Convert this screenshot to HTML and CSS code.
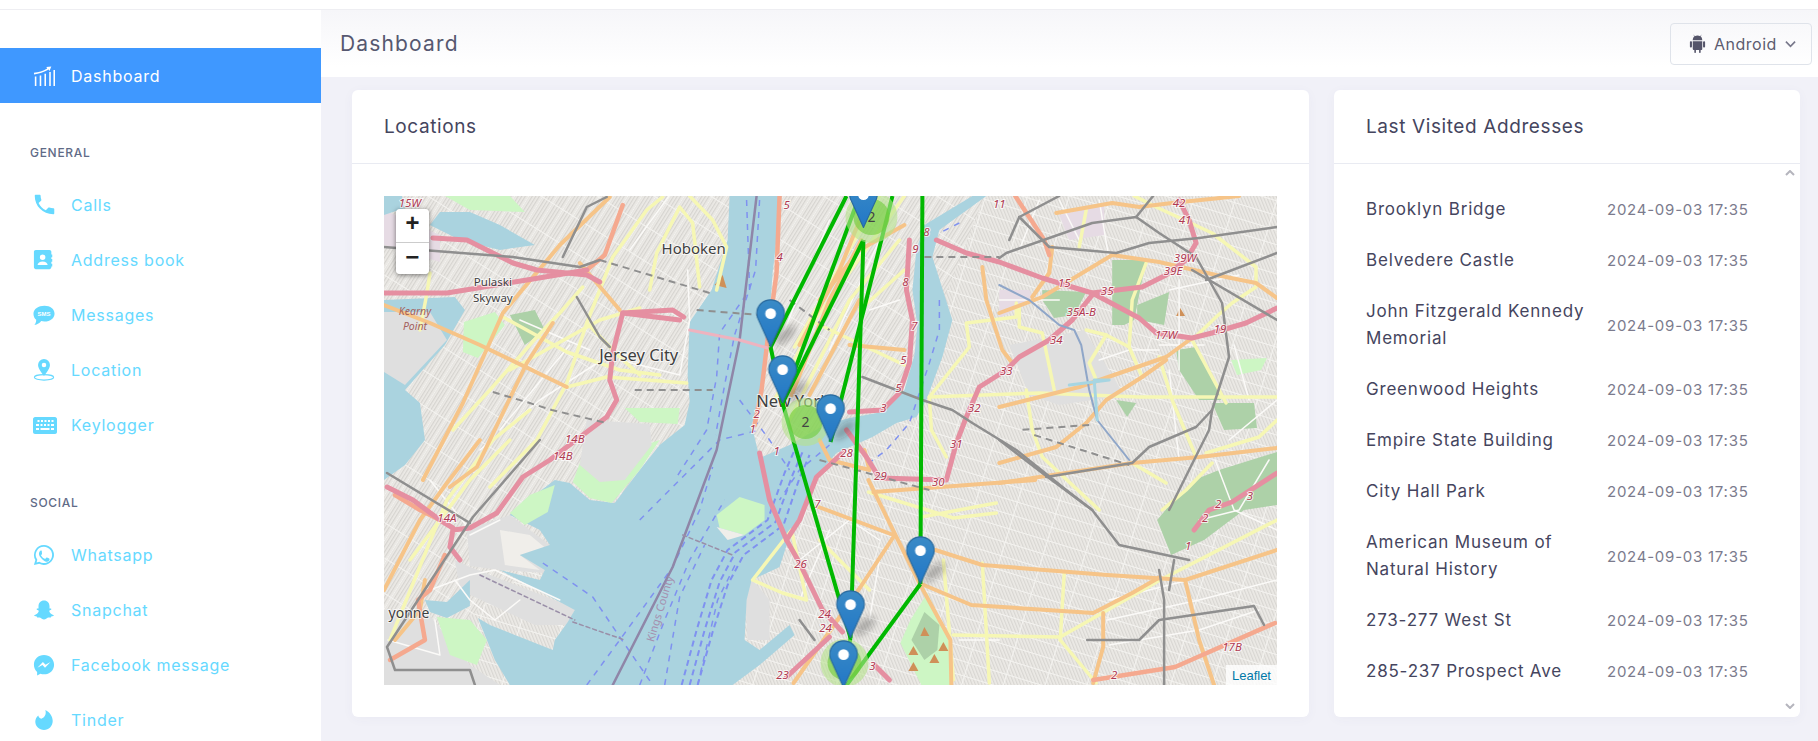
FILE: index.html
```html
<!DOCTYPE html>
<html lang="en">
<head>
	<meta charset="UTF-8">
	<title>Dashboard</title>
	<link rel="stylesheet" href="styles.css">
</head>
<body>
	<div class="topstrip"></div>
	<div class="layout">
		<aside class="sidebar">
			<a class="nav active">
				<svg class="ico" viewBox="0 0 24 24"><path d="M1 8.500C6 8 11 6.500 15.500 3.800l-.9-1.500L20 1.500l-2 5-.9-1.500C12 8 6.500 9.800 1.200 10.300z"/><path d="M2 12.500h1.700V23H2zM7.300 11.500H9V23H7.300zM12.500 9.500h1.700V23h-1.700zM17.700 7.500h1.700V23h-1.700zM22.300 5.500H24V23h-1.700z"/></svg>
				<span>Dashboard</span>
			</a>
			<div class="navlabel">General</div>
			<a class="nav">
				<svg class="ico" viewBox="0 0 24 24"><path d="M6.100 9.800c1.600 3.500 4.400 6.300 7.900 7.900l2.600-2.600c.3-.3.800-.4 1.200-.3 1.300.4 2.900.8 4.300.8.600 0 1.100.5 1.100 1.100v4.200c0 .6-.5 1.100-1.100 1.100C10.700 22 1.900 13.200 1.900 1.900 1.900 1.300 2.400.8 3 .8h4.200c.6 0 1.100.5 1.100 1.100 0 1.500.3 3 .8 4.300.1.400 0 .9-.3 1.200z"/></svg>
				<span>Calls</span>
			</a>
			<a class="nav">
				<svg class="ico" viewBox="0 0 24 24"><path fill-rule="evenodd" d="M3 1h15c1 0 2 .8 2 2v3h1v3h-1v2h1v3h-1v2h1v3h-1v1c0 1-1 2-2 2H3c-1 0-2-1-2-2V3c0-1.200 1-2 2-2zm7.500 5a3 3 0 1 0 0 6 3 3 0 0 0 0-6zM5 17.500h11c0-2.500-2.500-4-5.500-4S5 15 5 17.500z"/></svg>
				<span>Address book</span>
			</a>
			<a class="nav">
				<svg class="ico" viewBox="0 0 24 24"><path d="M12.500 2C18.900 2 23.500 5.600 23.500 10.500S18.900 19 12.500 19c-1.300 0-2.500-.1-3.600-.4C7.400 20.800 4.800 22.500 1.500 23c1.200-1.300 2-3.200 2-5.800C1.600 15.700.5 13.300.5 10.500.5 5.600 6 2 12.500 2z"/><text class="smstext" x="12" y="13">SMS</text></svg>
				<span>Messages</span>
			</a>
			<a class="nav">
				<svg class="ico" viewBox="0 0 24 24"><path d="M12 0a6.500 6.500 0 0 0-6.500 6.500C5.500 11 12 18.500 12 18.500S18.500 11 18.500 6.500A6.500 6.500 0 0 0 12 0zm0 9a2.500 2.500 0 1 1 0-5 2.500 2.500 0 0 1 0 5z"/><ellipse cx="12" cy="20" rx="10.500" ry="3" fill="none" stroke="#66d9ff" stroke-width="1.200"/></svg>
				<span>Location</span>
			</a>
			<a class="nav">
				<svg class="ico wide" viewBox="0 0 24 17"><path fill-rule="evenodd" d="M2 0h20c1 0 2 1 2 2v13c0 1-1 2-2 2H2c-1 0-2-1-2-2V2C0 1 1 0 2 0zm2.500 3v2h2V3zm3.500 0v2h2V3zm3.500 0v2h2V3zm3.500 0v2h2V3zm3.500 0v2h2V3zM3 7v2h3V7zm4.500 0v2h2V7zm3.500 0v2h2V7zm3.500 0v2h2V7zm3.500 0v2h3V7zM3 11v2h3v-2zm4.500 0v2h9v-2zm10.500 0v2h3v-2z"/></svg>
				<span>Keylogger</span>
			</a>
			<div class="navlabel">Social</div>
			<a class="nav">
				<svg class="ico" viewBox="0 0 24 24"><path fill-rule="evenodd" d="M12 1a10.900 10.900 0 0 0-9.400 16.400L1 23l5.800-1.500A10.900 10.900 0 1 0 12 1zm0 2a8.900 8.900 0 1 1-4.700 16.500l-.4-.2-3 .8.800-3-.3-.4A8.900 8.900 0 0 1 12 3z"/><path d="M8.800 7c-.3 0-.7.100-1 .5-.4.400-1.300 1.300-1.300 3s1.300 3.400 1.500 3.600c.2.200 2.600 3.900 6.200 5.300 1.700.1 3.300-.9 3.700-2 .2-.6.2-1.200.1-1.300-.2-.3-2.300-1.300-2.700-1.400-.3-.1-.6-.2-.8.200l-1 1.200c-.2.200-.4.200-.7.100-1.800-.8-3.100-2-4-3.600-.2-.4 0-.5.200-.7l.8-1c.1-.3.100-.5 0-.7L9.600 7.500c-.2-.4-.5-.5-.8-.5z"/></svg>
				<span>Whatsapp</span>
			</a>
			<a class="nav">
				<svg class="ico" viewBox="0 0 24 24"><path d="M12 1.500c3.700 0 6 2.900 6 6.300v2.500c.6.300 1.400-.2 1.900.3.500.7-.4 1.300-1.500 1.800-.6.300-.8.600-.6 1.200.8 1.900 2.400 3.300 4.700 4 .4.300.1.800-.5 1-.7.300-1.600.4-2.100.6-.3.500-.2 1.100-.8 1.100-1-.1-2.200-.3-3.200.2-1 .6-2 1.800-3.900 1.800s-2.900-1.200-3.900-1.800c-1-.5-2.200-.3-3.200-.2-.6 0-.5-.6-.8-1.100-.5-.2-1.400-.3-2.100-.6-.6-.2-.9-.7-.5-1 2.300-.7 3.900-2.100 4.700-4 .2-.6 0-.9-.6-1.200-1.100-.5-2-1.100-1.500-1.800.5-.5 1.300 0 1.900-.3V7.800c0-3.400 2.300-6.300 6-6.300z"/></svg>
				<span>Snapchat</span>
			</a>
			<a class="nav">
				<svg class="ico" viewBox="0 0 24 24"><path fill-rule="evenodd" d="M12 1C5.800 1 1 5.500 1 11.600c0 3.200 1.300 6 3.500 7.900V23.500l3.600-2c1.200.4 2.500.6 3.900.6 6.200 0 11-4.500 11-10.500S18.200 1 12 1zm1.100 14-2.800-3-5.500 3 6-6.400 2.900 3 5.400-3z"/></svg>
				<span>Facebook message</span>
			</a>
			<a class="nav">
				<svg class="ico" viewBox="0 0 24 24"><path d="M9 10.500C13.800 8.800 14.500 4.500 13.500 1c5 2.300 8 7.200 8 12.200 0 5.500-4.300 9.800-9.500 9.800S2.500 18.800 2.500 14c0-2.700 1.200-5.300 3.300-7C5.800 8.500 7.400 10.300 9 10.500z"/></svg>
				<span>Tinder</span>
			</a>
		</aside>

		<main class="content">
			<header class="pagehead">
				<h1>Dashboard</h1>
				<button class="devicebtn">
					<svg class="droid" viewBox="0 0 24 24"><path d="M6 9h12v10c0 .7-.5 1.200-1.200 1.200H16v3c0 1.100-2 1.100-2 0v-3h-4v3c0 1.100-2 1.100-2 0v-3H7.200C6.500 20.200 6 19.700 6 19zM3.700 9c.8 0 1.300.5 1.300 1.200v5.600c0 1.600-2.600 1.600-2.600 0v-5.600C2.400 9.500 3 9 3.700 9zm16.600 0c.7 0 1.300.5 1.300 1.200v5.600c0 1.600-2.600 1.600-2.600 0v-5.600c0-.7.500-1.200 1.300-1.200zM15.500 2.700l1.200-1.900.4.300-1.100 1.900C17.200 3.800 18 5.500 18 8H6c0-2.500.8-4.200 2-5l-1.100-1.900.4-.3 1.200 1.900C10.500 1.700 13.500 1.700 15.500 2.700z"/></svg>
					<span>Android</span>
					<svg class="chev" viewBox="0 0 12 8"><path d="M1 1.500 6 6.500l5-5"/></svg>
				</button>
			</header>

			<div class="cards">
				<section class="card mapcard">
					<h2 class="cardhead">Locations</h2>
					<div class="cardbody">
						<div class="map">
							<svg class="mapsvg" viewBox="384 196 894 489" preserveAspectRatio="none">
								<defs>
									<pattern id="hatchA" width="3" height="3" patternUnits="userSpaceOnUse" patternTransform="rotate(-22)">
										<rect width="3" height="3" fill="#eceae6"/>
										<rect width="1.200" height="3" fill="#d8d6d2"/>
									</pattern>
									<pattern id="hatchB" width="3" height="3" patternUnits="userSpaceOnUse" patternTransform="rotate(32)">
										<rect width="3" height="3" fill="#eceae6"/>
										<rect width="1.200" height="3" fill="#d6d4d0"/>
									</pattern>
									<pattern id="gridA" width="40" height="14" patternUnits="userSpaceOnUse" patternTransform="rotate(17)">
										<rect x="0" y="0" width="40" height="1" fill="#f4f3f0"/>
										<rect x="0" y="0" width="1" height="14" fill="#f4f3f0"/>
									</pattern>
									<pattern id="gridB" width="30" height="12" patternUnits="userSpaceOnUse" patternTransform="rotate(-58)">
										<rect x="0" y="0" width="30" height="1" fill="#f4f3f0"/>
										<rect x="0" y="0" width="1" height="12" fill="#f4f3f0"/>
									</pattern>
									<linearGradient id="pinfill" x1="0" y1="0" x2="0" y2="1">
										<stop offset="0" stop-color="#3a8bc6"/>
										<stop offset="1" stop-color="#2277c7"/>
									</linearGradient>
									<symbol id="pin" viewBox="0 0 25 41">
										<path d="M12.500.7C6 .7.700 5.800.700 12.300c0 2.200.7 4.300 1.700 6L12.500 40.600l10.100-22.300c1-1.700 1.700-3.800 1.700-6C24.300 5.800 19 .7 12.500.7z" fill="url(#pinfill)" stroke="#2a6a9e" stroke-width="1"/>
										<circle cx="12.500" cy="12.500" r="4.600" fill="#fff"/>
									</symbol>
									<filter id="soft"><feGaussianBlur stdDeviation="3"/></filter>
								</defs>

								<!-- land -->
								<rect x="384" y="196" width="894" height="489" fill="url(#hatchA)"/>
								<rect x="384" y="196" width="894" height="489" fill="url(#gridA)"/>
								<polygon points="384,196 782,196 760,460 640,480 384,685" fill="url(#hatchB)"/>
								<polygon points="384,196 782,196 760,460 640,480 384,685" fill="url(#gridB)"/>
								<polygon points="782,196 985,196 905,400 830,440 760,460" fill="url(#hatchB)"/>
								<polygon points="782,196 985,196 905,400 830,440 760,460" fill="url(#gridB)"/>

								<!-- plain areas -->
								<polygon class="plain" points="384,610 425,610 450,640 470,665 500,685 384,685"/>
								<polygon class="plain" points="455,560 470,567 575,608 570,625 535,625 460,590"/>
								<polygon class="plain" points="467,530 510,515 550,545 545,573 500,570 470,566"/>
								<polygon class="pale" points="500,530 530,535 548,550 520,555 540,570 505,565"/>
								<polygon class="plain" points="384,310 430,310 447,340 405,385 384,372"/>
								<polygon class="plain" points="1010,345 1085,330 1125,395 1060,405 1030,395"/>
								<polygon class="plain" points="745,590 753,580 770,600 770,640 748,640"/>
								<polygon class="lilac" points="384,210 440,235 440,262 384,245"/>
								<polygon class="lilac" points="1000,290 1030,290 1035,300 1000,318"/>
								<polygon class="lilac" points="1060,215 1105,205 1105,235 1070,240"/>

								<!-- water -->
								<polygon class="water" points="730,196 728,240 712,290 690,322 688,375 690,402 685,425 660,445 640,470 615,503 590,500 570,483 555,480 535,495 525,500 510,515 540,530 550,545 520,555 545,570 540,580 500,570 575,610 568,622 555,640 553,650 490,625 478,618 487,640 495,660 510,685 733,685 760,665 795,635 790,625 760,650 745,640 747,600 752,580 780,567 793,527 810,503 813,480 837,453 873,437 897,423 917,417 927,400 943,357 953,320 933,257 940,230 987,196 973,196 925,225 917,250 913,290 918,325 915,355 905,390 883,412 850,418 825,425 790,445 760,458 752,425 763,390 768,347 773,273 782,196"/>
								<polygon class="water" points="440,212 470,212 500,225 535,245 500,250 460,240 430,225"/>
								<polygon class="water" points="384,300 455,297 465,310 445,345 405,390 420,403 425,440 405,465 384,480"/>
								<polygon class="plain" points="384,312 430,312 447,340 405,385 384,372"/>
								<polygon class="water" points="425,600 447,602 470,580 470,606 447,618 430,612"/>
								<polygon class="water" points="384,196 402,196 405,208 384,215"/>

								<!-- parks -->
								<polygon class="lawn" points="464,322 495,312 505,325 478,358 463,352"/>
								<polygon class="lawn" points="625,408 680,408 678,424 640,422"/>
								<polygon class="lawn" points="660,440 640,470 612,503 590,498 573,482 585,450 610,465 645,445"/>
								<polygon class="plain" points="587,420 650,424 652,445 625,480 600,482 580,465"/>
								<polygon class="lawn" points="510,513 530,495 555,485 548,512 525,525"/>
								<polygon class="lawn" points="740,497 765,505 765,520 745,535 720,528 717,515"/>
								<polygon class="pale" points="717,527 745,535 728,540"/>
								<polygon class="lawn" points="437,617 470,620 487,640 477,665 450,655"/>
								<polygon class="lawn" points="928,593 950,640 952,685 922,685 901,643 911,620"/>
								<polygon class="wood" points="925,612 940,625 938,650 925,660 912,640"/>
								<polygon class="lawn" points="445,196 510,196 525,212 470,210"/>
								<polygon class="wood" points="510,315 535,310 545,330 525,345"/>
								<polygon class="wood" points="1043,290 1087,292 1075,315 1055,318 1043,300"/>
								<polygon class="wood" points="1113,260 1147,260 1135,320 1125,325 1113,325"/>
								<polygon class="wood" points="1138,305 1170,292 1165,325 1150,322 1138,320"/>
								<polygon class="wood" points="1177,350 1197,347 1217,385 1222,400 1200,400 1180,370"/>
								<polygon class="wood" points="1213,403 1255,403 1258,428 1225,430"/>
								<polygon class="wood" points="1117,400 1137,403 1128,417"/>
								<polygon class="wood" points="1220,470 1278,452 1278,505 1245,510 1205,540 1172,555 1158,520 1175,500 1195,480"/>
								<polygon class="lawn" points="1232,360 1268,358 1262,370 1238,375"/>
								<g class="peak">
									<polygon points="925,627 921,636 930,636"/><polygon points="914,646 909,655 919,655"/>
									<polygon points="944,642 939,651 949,651"/><polygon points="935,654 930,663 940,663"/>
									<polygon points="914,662 909,671 919,671"/><polygon points="1181,308 1177,316 1186,316"/>
									<polygon points="723,275 715,285 727,288"/>
								</g>

								<!-- ferry routes and boundaries -->
								<g class="ferry">
									<polyline points="747,200 750,290 720,333 717,377 707,430 677,477"/>
									<polyline points="760,200 756,270 735,335 725,385 716,435"/>
									<polyline points="587,685 620,640 673,567 700,510 713,467"/>
									<polyline points="640,685 665,620 690,560 725,500"/>
									<polyline points="665,685 680,597 705,545"/>
									<polyline points="698,685 718,600 738,560"/>
									<polyline points="543,563 593,597 620,637 653,685"/>
									<polyline points="940,300 940,330 930,363 910,423 887,450 860,470"/>
									<polyline points="960,223 940,233"/>
									<polyline points="830,445 800,470 780,500"/>
									<polyline points="740,400 770,440 790,470"/>
									<polyline points="640,520 690,470 720,440 760,430"/>
								</g>
								<g class="ferrybig">
									<polyline points="682,685 697,630 712,580 728,550 768,520 785,473 795,450"/>
									<polyline points="690,685 705,630 720,582 736,552 776,522 793,475 803,452"/>
									<polyline points="698,685 713,632 728,585 744,555 784,525 800,478 810,455"/>
								</g>
								<polyline class="bound" points="613,685 673,567 717,450 740,340 757,196"/>
								<polyline class="bound thin" points="683,535 733,555"/>
								<polyline class="bound thin" points="573,622 625,640"/>
								<polyline class="bound thin" points="480,575 575,620"/>

								<!-- minor streets -->
								<g class="st">
									<polyline points="480,450 540,400 610,355"/><polyline points="500,430 570,345"/>
									<polyline points="620,360 680,375 690,320"/><polyline points="690,320 688,270"/>
									<polyline points="630,250 670,195"/><polyline points="520,320 590,350"/>
									<polyline points="430,480 470,530"/><polyline points="430,590 470,575 495,570 560,600"/>
									<polyline points="455,580 470,600 495,620 520,600"/><polyline points="388,640 440,655 435,620"/>
									<polyline points="500,520 470,535"/>
									<polyline points="785,330 830,220"/><polyline points="830,350 880,240"/>
									<polyline points="900,300 870,310"/><polyline points="800,560 850,520 880,540"/>
									<polyline points="1000,300 1060,300"/><polyline points="1100,360 1130,350 1160,350"/>
									<polyline points="1170,370 1180,460"/><polyline points="1160,345 1205,345"/>
									<polyline points="1170,290 1240,275"/><polyline points="1180,280 1180,370"/>
									<polyline points="1235,345 1250,400"/><polyline points="1278,400 1230,440"/>
									<polyline points="1100,200 1110,260"/><polyline points="1060,200 1080,240"/>
									<polyline points="1020,250 1040,200"/><polyline points="1270,460 1240,510 1200,520"/>
									<polyline points="1108,620 1200,600 1278,580"/><polyline points="1110,645 1200,630 1260,610"/>
									<polyline points="1110,600 1190,580"/><polyline points="1216,460 1235,510 1278,530"/>
									<polyline points="960,640 1000,640"/><polyline points="830,530 800,600"/>
									<polyline points="880,560 870,620"/>
								</g>

								<!-- secondary -->
								<g class="se">
									<polyline points="453,430 490,390 537,337 560,313 583,287"/>
									<polyline points="490,487 537,440 567,383 587,323 613,257 647,210 663,197"/>
									<polyline points="567,387 607,377 687,383"/>
									<polyline points="503,317 567,352 620,370 660,375"/>
									<polyline points="587,323 620,357 640,375"/>
									<polyline points="650,290 657,253 680,207 693,223 700,287"/>
									<polyline points="717,290 727,247 713,220 690,196"/>
									<polyline points="430,273 427,293 420,330"/>
									<polyline points="390,640 447,500 493,440 530,410"/>
									<polyline points="410,560 470,480 510,440"/>
									<polyline points="510,370 600,320 640,308"/>
									<polyline points="795,347 880,196"/><polyline points="775,400 815,320 830,300 905,196"/>
									<polyline points="790,420 850,300 900,240"/><polyline points="860,310 905,270"/>
									<polyline points="810,320 905,365"/>
									<polyline points="930,397 970,347 967,323 1017,317 1017,303"/>
									<polyline points="930,397 932,430 947,457"/>
									<polyline points="930,397 1040,393 1140,397 1278,397"/>
									<polyline points="1020,307 1020,327 1043,333 1055,390"/>
									<polyline points="1027,390 1033,430 1043,457 1100,510"/>
									<polyline points="1087,330 1107,335 1090,363 1097,380"/>
									<polyline points="1107,335 1130,347 1143,377"/>
									<polyline points="1130,347 1133,300 1147,263"/>
									<polyline points="1160,357 1173,400 1197,457"/>
									<polyline points="1193,340 1220,390 1227,403"/>
									<polyline points="1193,340 1217,317 1233,303 1257,287 1257,267 1213,233 1157,207 1135,196"/>
									<polyline points="1087,210 1080,247"/>
									<polyline points="1133,463 1167,483"/>
									<polyline points="1213,463 1187,490 1163,510"/>
									<polyline points="1207,453 1260,437 1278,420"/>
									<polyline points="869,492 954,518 997,513"/>
									<polyline points="922,517 997,503"/>
									<polyline points="944,560 954,680"/><polyline points="983,563 990,683"/>
									<polyline points="954,635 1061,637 1161,580"/>
									<polyline points="1061,640 1097,683"/><polyline points="1065,573 1061,640"/>
									<polyline points="1161,580 1278,520"/>
									<polyline points="753,580 792,530 807,600 783,593 753,580"/>
									<polyline points="870,590 820,540"/>
								</g>

								<!-- primary -->
								<g class="pr">
									<polyline points="423,480 463,403 503,313 560,245 610,197"/>
									<polyline points="553,323 527,363 477,467 450,487"/>
									<polyline points="384,305 430,323 480,345 567,387"/>
									<polyline points="620,310 580,263"/>
									<polyline points="384,590 420,520 447,483 480,440"/>
									<polyline points="395,640 420,610 425,580"/>
									<polyline points="800,345 840,270 870,196"/><polyline points="792,395 830,300 862,240"/>
									<polyline points="810,395 860,300"/><polyline points="850,345 905,350"/>
									<polyline points="820,300 860,250 905,225"/>
									<polyline points="1000,313 1043,297 1113,255 1160,262 1217,275 1257,283 1278,298"/>
									<polyline points="1000,407 1080,387 1167,357 1193,338"/>
									<polyline points="1000,463 1057,447 1087,423 1107,400 1143,377 1167,360"/>
									<polyline points="1000,483 1133,463 1200,457 1278,448"/>
									<polyline points="1057,213 1113,203 1140,207 1173,203 1240,196"/>
									<polyline points="1053,247 1050,273 1033,297"/>
									<polyline points="983,267 987,300 1003,350 1013,363"/>
									<polyline points="922,584 972,605 1094,613 1133,593 1161,577"/>
									<polyline points="936,550 983,565 1108,575 1186,580 1278,550"/>
									<polyline points="869,480 897,537 922,587 951,640 952,685"/>
									<polyline points="894,537 861,587 822,643 794,683"/>
									<polyline points="1104,613 1104,647 1094,683"/>
									<polyline points="819,507 894,535"/>
									<polyline points="874,492 1036,480"/>
									<polyline points="1186,580 1200,640 1215,685"/>
									<polyline points="820,440 830,460 870,470 865,450"/>
								</g>

								<!-- trunk -->
								<g class="tr">
									<polyline points="780,196 777,273 768,340 762,390 755,425"/>
									<polyline points="623,205 605,255 587,270"/>
									<polyline points="395,495 420,510 440,520"/>
									<polyline points="445,555 430,590 418,600 425,640 390,660"/>
									<polyline points="1094,680 1176,667 1276,623"/>
									<polyline points="1016,196 1045,240 1050,255"/>
								</g>

								<!-- motorways -->
								<g class="mw">
									<polyline points="384,293 447,293 527,280 587,270"/>
									<polyline points="433,238 467,240 513,263 537,270 587,275 600,282"/>
									<polyline points="684,317 673,310 623,313 613,353 610,380 617,400 607,417 567,447 550,460 523,477 497,513 470,528 453,530 450,547 460,560"/>
									<polyline points="623,313 680,320"/>
									<polyline points="387,487 413,500 440,520 453,528"/>
									<polyline points="910,240 907,290 913,320 910,363 900,393 883,410 850,412"/>
									<polyline points="937,240 967,253 1000,262 1043,278 1093,293 1140,318 1157,333 1193,338 1213,333 1247,323 1278,308"/>
									<polyline points="1093,293 1143,287 1167,275 1187,260 1197,243 1190,220 1180,200"/>
									<polyline points="1093,295 1073,320 1050,340 1020,357 1007,370 980,387 967,417 957,443 947,480 880,478 867,457 847,430"/>
									<polyline points="843,453 817,477 800,520 787,540"/>
									<polyline points="760,453 770,500 787,540 800,563 823,610 843,632"/>
									<polyline points="787,677 830,637"/>
									<polyline points="1278,473 1233,502 1210,510 1195,530"/>
									<polyline points="875,665 890,680"/>
								</g>
								<polyline class="mwlight" points="690,330 740,340 768,348"/>

								<!-- railways -->
								<g class="rl">
									<polyline points="863,377 923,400 953,410 973,423 1017,450 1067,490 1093,510"/>
									<polyline points="1000,440 1043,473 1093,510 1120,545 1190,560"/>
									<polyline points="1047,477 1133,463 1150,447 1197,427 1213,410 1230,357 1223,303 1197,257 1160,233 1137,217 1093,223 1007,253 1000,258"/>
									<polyline points="1050,247 1117,253 1150,243 1200,238 1278,227"/>
									<polyline points="1170,510 1210,430 1213,410"/>
									<polyline points="1193,270 1278,320"/>
									<polyline points="1207,280 1278,253"/>
									<polyline points="1020,217 1050,247"/><polyline points="1010,240 1020,217 1060,196"/>
									<polyline points="1154,196 1137,217"/>
									<polyline points="1160,570 1165,600 1165,685"/>
									<polyline points="1088,640 1140,640 1160,620 1255,606 1265,625"/>
									<polyline points="1170,590 1175,560"/>
									<polyline points="384,247 513,257 580,267 600,260"/>
									<polyline points="563,257 587,207 607,197"/>
									<polyline points="577,297 600,337 610,347"/>
									<polyline points="540,440 473,517 420,597 387,647 395,670 470,670 475,685"/>
									<polyline points="387,473 470,523"/>
									<polyline points="815,640 800,620"/>
								</g>
								<g class="rldash">
									<polyline points="600,260 710,293"/>
									<polyline points="493,392 530,403 552,410 607,423"/>
									<polyline points="635,390 713,390"/>
									<polyline points="697,310 760,315"/>
									<polyline points="925,257 1000,257"/>
									<polyline points="1035,435 1130,465"/>
									<polyline points="1090,425 1020,430"/>
									<polyline points="820,460 930,490"/>
									<polyline points="790,300 830,330"/>
								</g>
								<polyline class="canal" points="1000,285 1030,300 1060,325 1075,330 1082,345 1090,390 1098,420 1130,460"/>
								<polyline class="canal pale" points="1070,385 1110,380 1095,380 1098,420"/>

								<!-- labels -->
								<g class="hw">
									<text x="410" y="204">15W</text><text x="787" y="206">5</text><text x="780" y="258">4</text>
									<text x="757" y="415">2</text><text x="753" y="430">1</text><text x="777" y="452">1</text>
									<text x="575" y="440">14B</text><text x="563" y="457">14B</text><text x="447" y="519">14A</text>
									<text x="916" y="250">9</text><text x="927" y="233">8</text><text x="906" y="283">8</text>
									<text x="915" y="327">7</text><text x="904" y="361">5</text><text x="899" y="389">5</text>
									<text x="884" y="409">3</text><text x="1065" y="284">15</text><text x="1108" y="292">35</text>
									<text x="1082" y="313">35A-B</text><text x="1057" y="341">34</text><text x="1007" y="372">33</text>
									<text x="975" y="409">32</text><text x="957" y="445">31</text><text x="939" y="483">30</text>
									<text x="881" y="477">29</text><text x="847" y="454">28</text><text x="1167" y="336">17W</text>
									<text x="1221" y="330">19</text><text x="1186" y="259">39W</text><text x="1174" y="272">39E</text>
									<text x="1186" y="221">41</text><text x="1180" y="204">42</text><text x="818" y="505">7</text>
									<text x="801" y="565">26</text><text x="825" y="615">24</text><text x="826" y="629">24</text>
									<text x="783" y="676">23</text><text x="873" y="667">3</text><text x="1233" y="648">17B</text>
									<text x="1115" y="676">2</text><text x="1219" y="505">2</text><text x="1251" y="497">3</text>
									<text x="1206" y="519">2</text><text x="1189" y="547">1</text><text x="1000" y="205">11</text>
								</g>
								<g class="place">
									<text x="694" y="254" font-size="15">Hoboken</text>
									<text x="639" y="361" font-size="16.500">Jersey City</text>
									<text x="793" y="407" font-size="16.500">New York</text>
									<text x="493" y="286" font-size="11.500">Pulaski</text>
									<text x="493" y="302" font-size="11.500">Skyway</text>
									<text x="409" y="618" font-size="14">yonne</text>
								</g>
								<g class="kearny">
									<text x="415" y="315">Kearny</text>
									<text x="415" y="330">Point</text>
								</g>
								<text class="county" x="664" y="610" transform="rotate(-73 664 610)">Kings County</text>

								<!-- route -->
								<g class="route">
									<line x1="771" y1="347" x2="847" y2="196"/>
									<line x1="783" y1="403" x2="860" y2="196"/>
									<line x1="783" y1="403" x2="864" y2="240"/>
									<line x1="831" y1="442" x2="893" y2="196"/>
									<line x1="864" y1="240" x2="851" y2="638"/>
									<line x1="923" y1="196" x2="921" y2="584"/>
									<line x1="771" y1="347" x2="783" y2="403"/>
									<line x1="783" y1="403" x2="851" y2="638"/>
									<line x1="851" y1="638" x2="845" y2="672"/>
									<line x1="921" y1="584" x2="845" y2="688"/>
								</g>

								<!-- clusters -->
								<circle class="clout" cx="872" cy="217" r="26"/><circle class="clin" cx="872" cy="217" r="18"/>
								<text class="clnum" x="872" y="222">2</text>
								<circle class="clout" cx="806" cy="422" r="24"/><circle class="clin" cx="806" cy="422" r="17"/>
								<text class="clnum" x="806" y="427">2</text>
								<circle class="clout" cx="845" cy="663" r="24"/><circle class="clin" cx="845" cy="663" r="17"/>

								<!-- pin shadows -->
								<g class="pinshadow">
									<ellipse cx="785" cy="335" rx="13" ry="6" transform="rotate(-40 785 335)"/>
									<ellipse cx="797" cy="391" rx="13" ry="6" transform="rotate(-40 797 391)"/>
									<ellipse cx="845" cy="430" rx="13" ry="6" transform="rotate(-40 845 430)"/>
									<ellipse cx="935" cy="572" rx="13" ry="6" transform="rotate(-40 935 572)"/>
									<ellipse cx="865" cy="626" rx="13" ry="6" transform="rotate(-40 865 626)"/>
								</g>

								<!-- pins -->
								<use href="#pin" x="849" y="180" width="30" height="48"/>
								<use href="#pin" x="756" y="299" width="30" height="48"/>
								<use href="#pin" x="768" y="355" width="30" height="48"/>
								<use href="#pin" x="816" y="394" width="30" height="48"/>
								<use href="#pin" x="906" y="536" width="30" height="48"/>
								<use href="#pin" x="836" y="590" width="30" height="48"/>
								<use href="#pin" x="829" y="640" width="30" height="48"/>
							</svg>
							<div class="zoomctl">
								<a class="zoombtn">+</a>
								<a class="zoombtn">−</a>
							</div>
							<div class="attrib">Leaflet</div>
						</div>
					</div>
				</section>

				<section class="card listcard">
					<h2 class="cardhead">Last Visited Addresses</h2>
					<div class="addrlist">
						<div class="addr"><span class="name">Brooklyn Bridge</span><span class="when">2024-09-03 17:35</span></div>
						<div class="addr"><span class="name">Belvedere Castle</span><span class="when">2024-09-03 17:35</span></div>
						<div class="addr"><span class="name">John Fitzgerald Kennedy Memorial</span><span class="when">2024-09-03 17:35</span></div>
						<div class="addr"><span class="name">Greenwood Heights</span><span class="when">2024-09-03 17:35</span></div>
						<div class="addr"><span class="name">Empire State Building</span><span class="when">2024-09-03 17:35</span></div>
						<div class="addr"><span class="name">City Hall Park</span><span class="when">2024-09-03 17:35</span></div>
						<div class="addr"><span class="name">American Museum of Natural History</span><span class="when">2024-09-03 17:35</span></div>
						<div class="addr"><span class="name">273-277 West St</span><span class="when">2024-09-03 17:35</span></div>
						<div class="addr"><span class="name">285-237 Prospect Ave</span><span class="when">2024-09-03 17:35</span></div>
						<svg class="scrollup" viewBox="0 0 10 6"><path d="M1 5 5 1l4 4"/></svg>
						<svg class="scrolldown" viewBox="0 0 10 6"><path d="M1 1l4 4 4-4"/></svg>
					</div>
				</section>
			</div>
		</main>
	</div>
</body>
</html>
```

FILE: styles.css
```css
*{box-sizing: border-box;}
html,body{margin: 0;height: 741px;overflow: hidden;}
body{background: #fff;font-family: "Inter","Liberation Sans",sans-serif;color: #45455e;}
.topstrip{height: 10px;background: #fff;border-bottom: 1px solid #eeeef2;}
.layout{display: flex;height: 731px;}

/* sidebar */
.sidebar{width: 321px;flex: none;padding-top: 38px;background: #fff;}
.nav{display: flex;align-items: center;height: 55px;padding-left: 33px;gap: 16px;color: #66d9ff;font-size: 16px;letter-spacing: .75px;}
.nav.active{background: #3f98ff;color: #fff;}
.ico{width: 22px;height: 22px;flex: none;fill: #66d9ff;}
.ico.wide{width: 24px;height: 17px;margin-right: -2px;}
.active .ico{fill: #fff;}
.smstext{font: bold 6.500px "Liberation Sans",sans-serif;fill: #fff;text-anchor: middle;letter-spacing: 0;}
.navlabel{height: 18px;line-height: 20px;margin: 40px 0 16.500px 30px;font-size: 12px;font-weight: 500;letter-spacing: .7px;text-transform: uppercase;color: #5f6b87;}

/* header */
.content{flex: 1;min-width: 0;background: #f1f1f8;}
.pagehead{display: flex;align-items: center;justify-content: space-between;height: 67px;padding: 0 6px 0 19px;background: linear-gradient(#f6f6f9,#fff 85%);}
.pagehead h1{margin: 0;font-size: 21px;line-height: 30px;font-weight: 400;letter-spacing: 1.15px;color: #565870;}
.devicebtn{display: flex;align-items: center;width: 142px;height: 42px;padding: 0 0 0 17px;background: transparent;border: 1px solid #dfe3ea;border-radius: 4px;font: inherit;font-size: 16px;letter-spacing: .5px;color: #5c5c70;}
.droid{width: 19px;height: 19px;margin-right: 7px;fill: #55556a;}
.chev{width: 11px;height: 8px;margin-left: 8px;fill: none;stroke: #77778a;stroke-width: 1.800;}

/* cards */
.cards{display: flex;gap: 25px;padding: 13px 18px 0 31px;}
.card{height: 627px;background: #fff;border-radius: 6px;box-shadow: 0 2px 12px rgba(80,80,120,.04);}
.mapcard{width: 957px;}
.listcard{width: 466px;}
.cardhead{height: 74px;line-height: 74px;margin: 0;padding-left: 32px;border-bottom: 1px solid #e9ebf2;font-size: 19px;font-weight: 400;letter-spacing: .6px;color: #45455e;}
.cardbody{padding: 32px;}
.map{position: relative;height: 489px;overflow: hidden;}
.mapsvg{display: block;width: 100%;height: 100%;}

/* map layers */
.water{fill: #aad3df;}
.plain{fill: #dfdfdf;}
.pale{fill: #f0eeea;}
.lilac{fill: #e6dbe4;}
.lawn{fill: #cdf6c4;}
.wood{fill: #add1a8;}
.peak{fill: #cf9058;}
.mapsvg polyline{fill: none;stroke-linejoin: round;stroke-linecap: round;}
.st polyline{stroke: #fbfaf8;stroke-width: 1.500;}
.se polyline{stroke: #f6f7b4;stroke-width: 3.500;}
.pr polyline{stroke: #f6c488;stroke-width: 4;}
.tr polyline{stroke: #f5a98f;stroke-width: 4.500;}
.mw polyline{stroke: #e58fa1;stroke-width: 5;}
.mwlight{stroke: #eeb3bf;stroke-width: 3;}
.rl polyline{stroke: #8f8f8f;stroke-width: 2.500;}
.rldash polyline{stroke: #8f8f8f;stroke-width: 2;stroke-dasharray: 7 5;stroke-linecap: butt;}
.ferry polyline{stroke: #7f91f0;stroke-width: 1.500;stroke-dasharray: 6 6;stroke-linecap: butt;}
.ferrybig polyline{stroke: #7f91f0;stroke-width: 2;stroke-dasharray: 6 4;stroke-linecap: butt;}
.bound{stroke: #8f86a8;stroke-width: 2.500;}
.bound.thin{stroke-width: 1.500;stroke-dasharray: 4 3;stroke: #9a8fa8;}
.canal{stroke: #8fa6c8;stroke-width: 2;}
.canal.pale{stroke: #a6d5e2;stroke-width: 3;}
.hw text{font: italic 11.500px "Noto Sans",sans-serif;fill: #b03a52;text-anchor: middle;dominant-baseline: middle;paint-order: stroke;stroke: rgba(255,255,255,.75);stroke-width: 2px;}
.place text{font-family: "Noto Sans",sans-serif;fill: #3f3f3f;text-anchor: middle;paint-order: stroke;stroke: rgba(255,255,255,.7);stroke-width: 2px;}
.kearny text{font: italic 10.500px "Noto Sans",sans-serif;fill: #a4605c;text-anchor: middle;}
.county{font: 11px "Noto Sans",sans-serif;fill: #a58fae;text-anchor: middle;}
.route line{stroke: #00b800;stroke-width: 4;}
.clout{fill: rgba(181,226,140,.6);}
.clin{fill: rgba(110,204,57,.6);}
.clnum{font: 14px "Noto Sans",sans-serif;fill: #444;text-anchor: middle;}
.pinshadow{fill: rgba(30,30,30,.28);filter: url(#soft);}

/* leaflet bits */
.zoomctl{position: absolute;left: 12px;top: 13px;width: 33px;border-radius: 4px;box-shadow: 0 1px 5px rgba(0,0,0,.5);overflow: hidden;}
.zoombtn{display: block;height: 32.500px;background: #fff;text-align: center;font: bold 24px/31px "Liberation Mono",monospace;color: #222;}
.zoombtn + .zoombtn{border-top: 1px solid #ccc;}
.attrib{position: absolute;right: 0;bottom: 0;height: 20px;padding: 0 6px;background: rgba(255,255,255,.8);font: 13px/21px "Liberation Sans",sans-serif;color: #0078a8;}

/* address list */
.addrlist{position: relative;height: 552px;padding-top: 20px;}
.addr{display: flex;align-items: center;padding: 12px 0 12px 32px;}
.name{width: 241px;flex: none;padding-right: 12px;font-size: 17px;line-height: 27px;letter-spacing: .8px;color: #45455e;}
.when{font-size: 15px;letter-spacing: .75px;color: #7b7b8d;}
.scrollup,.scrolldown{position: absolute;right: 5px;width: 10px;height: 6px;fill: none;stroke: #b5b5bd;stroke-width: 2;}
.scrollup{top: 6px;}
.scrolldown{bottom: 7px;}
```
